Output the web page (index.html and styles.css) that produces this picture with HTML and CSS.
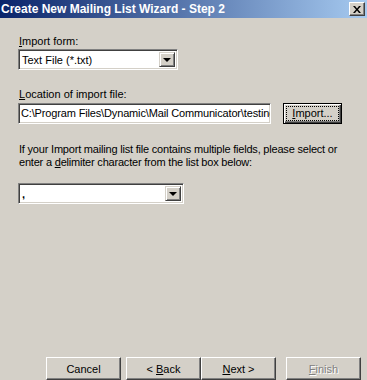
FILE: index.html
```html
<!DOCTYPE html>
<html lang="en">
<head>
  <meta charset="UTF-8" />
  <title>Create New Mailing List Wizard - Step 2</title>
  <link rel="stylesheet" href="styles.css">
</head>
<body>
  <div class="window">
    <div class="titlebar">
      <span class="title">Create New Mailing List Wizard - Step 2</span>
      <button class="close">
        <svg width="8" height="7" viewBox="0 0 8 7">
          <path d="M0 0h2l2 2.5L6 0h2L5 3.5 8 7H6L4 4.5 2 7H0l3-3.5z" fill="#000"/>
        </svg>
      </button>
    </div>

    <div class="content">
      <div class="label"><u>I</u>mport form:</div>
      <div class="combo combo-form">
        <span class="value">Text File (*.txt)</span>
        <span class="arrow"></span>
      </div>

      <div class="label label-location"><u>L</u>ocation of import file:</div>
      <div class="file-row">
        <div class="field">C:\Program Files\Dynamic\Mail Communicator\testing.txt</div>
        <button class="btn btn-default"><span class="focus"><u>I</u>mport...</span></button>
      </div>

      <p class="hint">If your Import mailing list file contains multiple fields, please select or<br>enter a <u>d</u>elimiter character from the list box below:</p>

      <div class="combo combo-delim">
        <span class="value">,</span>
        <span class="arrow"></span>
      </div>
    </div>

    <!-- wizard buttons -->
    <div class="footer">
      <button class="btn">Cancel</button>
      <div class="nav">
        <button class="btn">&lt; <u>B</u>ack</button>
        <button class="btn"><u>N</u>ext &gt;</button>
      </div>
      <button class="btn btn-disabled"><u>F</u>inish</button>
    </div>
  </div>
</body>
</html>
```

FILE: styles.css
```css
body {
  margin: 0;
  background: #d4d0c8;
  font-family: "Liberation Sans", Arial, sans-serif;
  font-size: 11px;
  color: #000;
}

.window {
  width: 367px;
  height: 380px;
  overflow: hidden;
}

.titlebar {
  height: 18px;
  display: flex;
  align-items: center;
  justify-content: space-between;
  padding: 0 2px 0 1px;
  background: linear-gradient(to right, #0a246a, #a6caf0);
}

.title {
  color: #fff;
  font-weight: bold;
  font-size: 12px;
  white-space: nowrap;
}

.close {
  width: 16px;
  height: 14px;
  padding: 0;
  display: flex;
  align-items: center;
  justify-content: center;
  background: #d4d0c8;
  border: 1px solid;
  border-color: #fff #404040 #404040 #fff;
  box-shadow: inset -1px -1px #808080;
}

.content {
  padding: 17px 0 0 18px;
}

.label {
  height: 13px;
  line-height: 13px;
  padding-left: 1px;
}

.label-location {
  margin-top: 18px;
}

.combo {
  margin-top: 1px;
  height: 21px;
  box-sizing: border-box;
  display: flex;
  align-items: stretch;
  background: #fff;
  border: 1px solid;
  border-color: #808080 #fff #fff #808080;
  box-shadow: inset 1px 1px #404040, inset -1px -1px #d4d0c8;
  padding: 2px;
}

.combo-form {
  width: 160px;
}

.combo-delim {
  width: 166px;
  margin-top: 14px;
}

.combo .value {
  flex: 1;
  line-height: 17px;
  padding-left: 1px;
  white-space: nowrap;
}

.combo-delim .value {
  font-weight: bold;
}

.arrow {
  width: 16px;
  box-sizing: border-box;
  display: flex;
  align-items: center;
  justify-content: center;
  background: #d4d0c8;
  border: 1px solid;
  border-color: #d4d0c8 #404040 #404040 #d4d0c8;
  box-shadow: inset 1px 1px #fff, inset -1px -1px #808080;
}

.arrow::after {
  content: "";
  border-left: 4px solid transparent;
  border-right: 4px solid transparent;
  border-top: 4px solid #000;
  margin-top: 1px;
}

.file-row {
  margin-top: 2px;
  display: flex;
  align-items: flex-start;
  gap: 12px;
}

.field {
  width: 253px;
  height: 21px;
  box-sizing: border-box;
  background: #fff;
  border: 1px solid;
  border-color: #808080 #fff #fff #808080;
  box-shadow: inset 1px 1px #404040, inset -1px -1px #d4d0c8;
  padding: 0 2px;
  line-height: 19px;
  letter-spacing: -0.15px;
  white-space: nowrap;
  overflow: hidden;
}

.btn {
  width: 75px;
  height: 23px;
  padding: 0;
  font-family: inherit;
  font-size: 11px;
  color: #000;
  background: #d4d0c8;
  border: 1px solid;
  border-color: #fff #404040 #404040 #fff;
  box-shadow: inset -1px -1px #808080;
}

.btn-default {
  width: 59px;
  height: 21px;
  border: 1px solid #000;
  box-shadow: inset 1px 1px #fff, inset -1px -1px #404040, inset -2px -2px #808080;
  display: flex;
  padding: 3px;
}

.btn-default .focus {
  flex: 1;
  outline: 1px dotted #000;
  line-height: 13px;
}

.hint {
  margin: 19px 0 0;
  line-height: 13px;
  padding-left: 1px;
  letter-spacing: -0.2px;
}

.footer {
  margin-top: 153px;
  padding-left: 46px;
  display: flex;
  gap: 5px;
}

.nav {
  display: flex;
}

.btn-disabled {
  margin-left: 5px;
  color: #808080;
  text-shadow: 1px 1px #fff;
}
```
